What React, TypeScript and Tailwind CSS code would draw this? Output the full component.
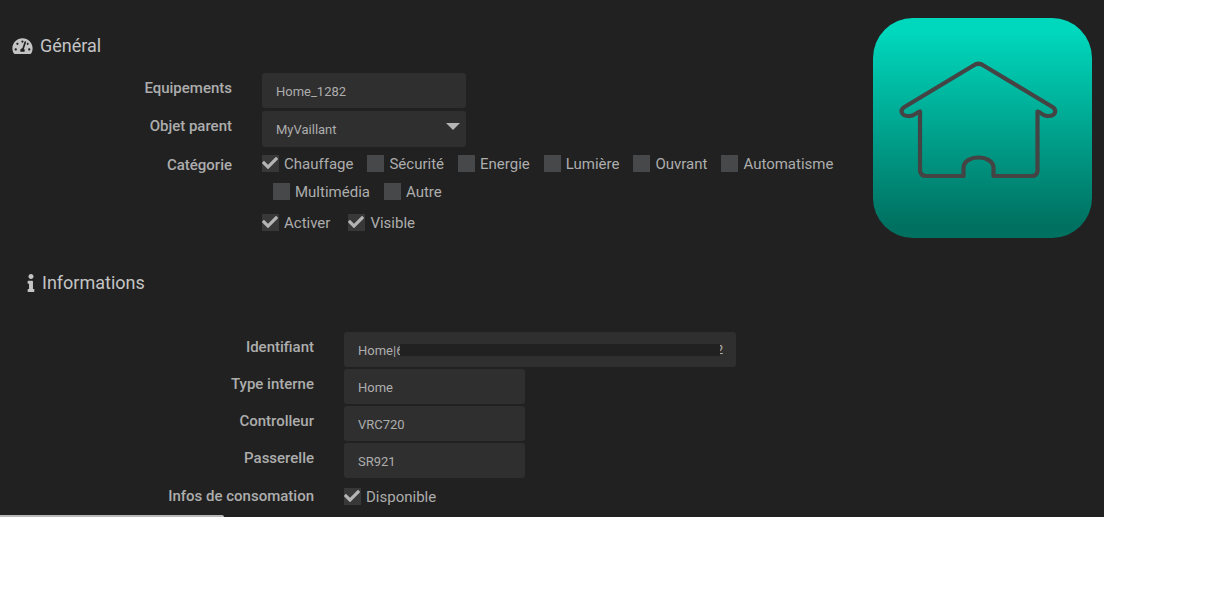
import { useId, useState } from "react";
import type { ReactNode } from "react";
import { FaCheck, FaInfo, FaTachometerAlt } from "react-icons/fa";

const fieldClass =
  "block rounded-[3px] bg-[#2f2f2f] px-[14px] pt-[2px] text-[13px] leading-[20px] text-[#adadad] outline-none";

function CheckBox({ label, checked = false }: { label: string; checked?: boolean }) {
  const [on, setOn] = useState(checked);
  return (
    <label className="flex h-[28px] items-center gap-[5px] pb-[1px] text-[15px] leading-[20px]">
      <span className="relative block size-[17px]">
        <input
          type="checkbox"
          checked={on}
          onChange={(e) => setOn(e.target.checked)}
          className="block size-[17px] appearance-none bg-[#474849] checked:bg-[#383838]"
        />
        {on && (
          <FaCheck className="pointer-events-none absolute top-0 left-0 size-[16px] text-[#b4b4b4]" />
        )}
      </span>
      {label}
    </label>
  );
}

function GeneralRow({ label, htmlFor, children }: { label?: string; htmlFor?: string; children: ReactNode }) {
  return (
    <div className="flex gap-[30px]">
      <div className="w-[232px] shrink-0 pt-[5px] text-right text-[15px] leading-[20px] font-medium">
        {label && <label htmlFor={htmlFor}>{label}</label>}
      </div>
      <div className="min-w-0 flex-1">{children}</div>
    </div>
  );
}

function InfoRow({ label, value }: { label: string; value: string }) {
  const id = useId();
  return (
    <div className="flex gap-[30px]">
      <label htmlFor={id} className="w-[314px] shrink-0 pt-[5px] text-right text-[15px] leading-[20px] font-medium">
        {label}
      </label>
      <input id={id} readOnly defaultValue={value} className={`${fieldClass} h-[35px] w-[181px]`} />
    </div>
  );
}

function HomeTile() {
  return (
    <svg viewBox="0 0 220 220" className="mt-[18px] mr-[12px] size-[220px] shrink-0" role="img" aria-label="Home">
      <defs>
        <linearGradient id="tile" x1="0" y1="0" x2="0" y2="1">
          <stop offset="0.06" stopColor="#00d8bd" />
          <stop offset="0.94" stopColor="#007161" />
        </linearGradient>
      </defs>
      <rect x="1" width="219" height="220" rx="40" fill="url(#tile)" />
      <path
        d="M101.500 47.500 L32.500 89 C27.500 92 29 98 36.500 98 C42.500 98.500 43 95 48 93.500 V153 Q49 158 54 158 H91.500 V150 C91.500 136 121.500 136 121.500 150 V158 H160 Q165 158 165.500 153 V93.500 C170.500 95 170.500 98.500 176.500 98 C184 98 185 92 180.500 89 L111.500 47.500 Q106.500 44 101.500 47.500 Z"
        fill="none"
        stroke="#444444"
        strokeWidth="4.200"
        strokeLinejoin="round"
      />
    </svg>
  );
}

export default function App() {
  return (
    <div className="min-h-screen bg-white">
      <main className="relative w-[90%] overflow-hidden bg-[#212121] pb-[6px] font-[Roboto,sans-serif] text-[#adadad]">
        <div className="flex items-start">
          <section className="min-w-0 flex-1 pt-[33px]">
            <h2 className="flex items-center gap-[7px] pl-[12px] text-[18px] leading-[25px] text-[#c4c4c4]">
              <FaTachometerAlt className="h-[18px] w-[21px]" />
              Général
            </h2>
            <form className="mt-[15px] flex flex-col gap-[3px]">
              <GeneralRow label="Equipements" htmlFor="name">
                <input id="name" defaultValue="Home_1282" className={`${fieldClass} h-[35px] w-[204px]`} />
              </GeneralRow>
              <GeneralRow label="Objet parent" htmlFor="parent">
                <div className="relative w-[204px]">
                  <select id="parent" className={`${fieldClass} h-[36px] w-full appearance-none`}>
                    <option>MyVaillant</option>
                  </select>
                  <svg viewBox="0 0 14 7" className="pointer-events-none absolute top-[12px] right-[6px] h-[7px] w-[14px]">
                    <path d="M0 0H14L7 7Z" fill="#b4b4b4" />
                  </svg>
                </div>
              </GeneralRow>
              <GeneralRow label="Catégorie">
                <div className="flex flex-wrap gap-x-[14px]">
                  <CheckBox label="Chauffage" checked />
                  <CheckBox label="Sécurité" />
                  <CheckBox label="Energie" />
                  <CheckBox label="Lumière" />
                  <CheckBox label="Ouvrant" />
                  <CheckBox label="Automatisme" />
                </div>
                <div className="flex flex-wrap gap-x-[14px] pl-[11px]">
                  <CheckBox label="Multimédia" />
                  <CheckBox label="Autre" />
                </div>
              </GeneralRow>
              <GeneralRow>
                <div className="flex gap-[18px]">
                  <CheckBox label="Activer" checked />
                  <CheckBox label="Visible" checked />
                </div>
              </GeneralRow>
            </form>
          </section>
          <HomeTile />
        </div>

        <section className="pt-[32px]">
          <h2 className="flex items-center gap-[7px] pl-[27px] text-[18px] leading-[25px] text-[#c4c4c4]">
            <FaInfo className="h-[18px] w-[8px]" />
            Informations
          </h2>
          <form className="mt-[37px] flex flex-col gap-[2px]">
            <div className="flex gap-[30px]">
              <label htmlFor="ident" className="w-[314px] shrink-0 pt-[5px] text-right text-[15px] leading-[20px] font-medium">
                Identifiant
              </label>
              <div className="relative w-[392px]">
                <input id="ident" readOnly defaultValue="Home|6" className={`${fieldClass} h-[35px] w-full`} />
                <span className="absolute top-[8px] right-[13px] w-[7px] overflow-hidden text-[13px] leading-[20px]">2</span>
                <span className="absolute top-[12px] right-[16px] left-[56px] h-[12px] bg-[#212121]" />
              </div>
            </div>
            <InfoRow label="Type interne" value="Home" />
            <InfoRow label="Controlleur" value="VRC720" />
            <InfoRow label="Passerelle" value="SR921" />
            <div className="flex gap-[30px] pt-[1px]">
              <div className="w-[314px] shrink-0 pt-[5px] text-right text-[15px] leading-[20px] font-medium">
                Infos de consomation
              </div>
              <div className="pt-[2px]">
                <CheckBox label="Disponible" checked />
              </div>
            </div>
          </form>
        </section>
        <div className="absolute bottom-0 left-0 h-[2px] w-[224px] rounded-tr-[2px] bg-[#b9b9bc]" />
      </main>
    </div>
  );
}
